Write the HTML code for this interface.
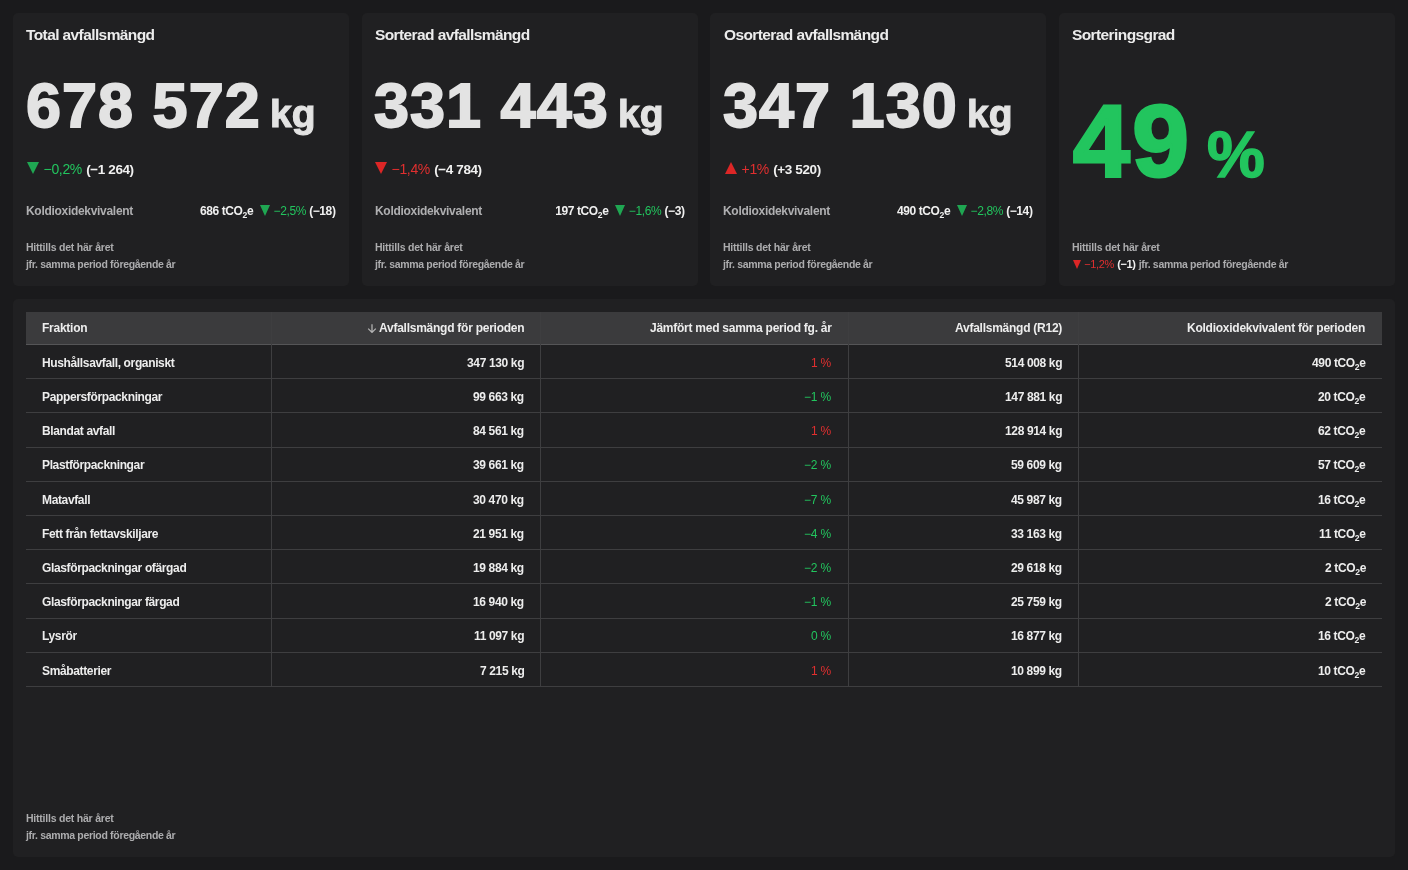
<!DOCTYPE html>
<html lang="sv">
<head>
<meta charset="utf-8">
<title>Avfall</title>
<style>
*{box-sizing:border-box;margin:0;padding:0}
:root{--hy:321.8px;--ry:356.8px;--fy1:813px;--fy2:829.8px}
html,body{width:1408px;height:870px;overflow:hidden;background:#1a1a1c;font-family:"Liberation Sans",sans-serif;color:#ececec}
.card{position:absolute;top:13px;width:336px;height:273px;background:#202022;border-radius:5px}
.abs{position:absolute;white-space:nowrap;line-height:1;will-change:transform}
.title{font-weight:700;font-size:15.5px;letter-spacing:-0.6px;color:#ececec;left:13.4px;top:14.4px}
.c4 .title{left:12.6px}
.big{font-weight:700;font-size:63px;color:#e3e3e3;-webkit-text-stroke:1.8px #e3e3e3;letter-spacing:1px;left:12.7px;top:60.6px}
.kg{font-weight:700;font-size:39px;color:#e3e3e3;-webkit-text-stroke:1.1px #e3e3e3;left:256.7px;top:80.8px}
.delta{left:13.6px;top:149px;font-size:14px;display:flex;align-items:baseline}
.tri{display:inline-block;width:0;height:0;border-left:6.3px solid transparent;border-right:6.3px solid transparent;border-top:12px solid #1fa652}
.tri.red{border-top-color:#dc2626}
.tri.up{border-top:0;border-bottom:12px solid #dc2626;margin-left:1px}
.tri.s{border-left-width:5.2px;border-right-width:5.2px;border-top-width:11px;position:relative;top:0.6px}
.green{color:#22c55e}
.red{color:#e02f2f}
.delta .pct{margin-left:4.6px}
.delta .aw{margin-left:4.3px;font-size:13.5px}
.pct{font-weight:400;letter-spacing:-0.35px}
.aw{font-weight:700;letter-spacing:-0.4px;color:#f0f0f0}
.co2row{left:13px;right:13.5px;top:191.2px;display:flex;justify-content:space-between;align-items:baseline;font-size:12px}
.co2r{display:flex;align-items:baseline}
.co2r .tri{margin-left:5px}
.co2r .pct{margin-left:4px}
.co2r .aw+.tri{margin-left:6.3px}
.co2r .pct+.aw{margin-left:3px}
.lbl{font-weight:700;color:#afafb1;letter-spacing:-0.3px}
.foot{left:13px;font-weight:700;font-size:10.5px;color:#acacae;letter-spacing:-0.22px}
.f1{top:229px}
.f2{top:245.8px}
.f4{display:flex;align-items:baseline}
.f4 .tri{border-left-width:4.6px;border-right-width:4.6px;border-top-width:9px;margin-left:0.6px}
.f4 .pct{margin-left:3.6px;font-size:11px}
.f4 .aw{margin-left:3.2px;font-size:11px}
.f4 .jfr{margin-left:3.3px}
.n49{font-weight:700;font-size:102px;color:#22c55e;-webkit-text-stroke:3px #22c55e;letter-spacing:2.5px;left:13.5px;top:76.5px}
.p49{font-weight:700;font-size:65px;color:#22c55e;-webkit-text-stroke:1.5px #22c55e;left:147.9px;top:108.5px}
sub{font-size:0.72em;vertical-align:-0.3em;line-height:0}
.tcard{position:absolute;left:13px;top:298.67px;width:1382px;height:558.33px;background:#202022;border-radius:5px}
.thead{position:absolute;left:26px;top:312px;width:1356px;height:32px;background:#3b3b3d}
.hline{position:absolute;left:26px;width:1356px;height:1px;background:#3e3e40}
.vline{position:absolute;top:312px;height:374.4px;width:1px;background:#3e3e40}
.th{font-weight:700;font-size:12px;letter-spacing:-0.25px;color:#ededed}
.arrow{position:absolute;left:366.8px;top:324.4px}
.hb{background:#555557}
.td{font-weight:700;font-size:12px;letter-spacing:-0.36px;color:#ededed}
.tp{font-weight:400;font-size:12px;letter-spacing:-0.2px}
.jf{letter-spacing:-0.32px}
</style>
</head>
<body>
<div class="card c1" style="left:13px">
  <div class="abs title">Total avfallsmängd</div>
  <div class="abs big">678 572</div>
  <div class="abs kg">kg</div>
  <div class="abs delta"><span class="tri "></span><span class="pct green">−0,2%</span><span class="aw">(−1 264)</span></div>
  <div class="abs co2row"><span class="lbl">Koldioxidekvivalent</span><span class="co2r"><span class="aw">686 tCO<sub>2</sub>e</span><span class="tri s"></span><span class="pct green">−2,5%</span><span class="aw">(−18)</span></span></div>
  <div class="abs foot f1">Hittills det här året</div>
  <div class="abs foot f2 jf">jfr. samma period föregående år</div>
</div>
<div class="card c2" style="left:361.67px">
  <div class="abs title">Sorterad avfallsmängd</div>
  <div class="abs big">331 443</div>
  <div class="abs kg">kg</div>
  <div class="abs delta"><span class="tri red"></span><span class="pct red">−1,4%</span><span class="aw">(−4 784)</span></div>
  <div class="abs co2row"><span class="lbl">Koldioxidekvivalent</span><span class="co2r"><span class="aw">197 tCO<sub>2</sub>e</span><span class="tri s"></span><span class="pct green">−1,6%</span><span class="aw">(−3)</span></span></div>
  <div class="abs foot f1">Hittills det här året</div>
  <div class="abs foot f2 jf">jfr. samma period föregående år</div>
</div>
<div class="card c3" style="left:710.33px">
  <div class="abs title">Osorterad avfallsmängd</div>
  <div class="abs big">347 130</div>
  <div class="abs kg">kg</div>
  <div class="abs delta"><span class="tri up"></span><span class="pct red">+1%</span><span class="aw">(+3 520)</span></div>
  <div class="abs co2row"><span class="lbl">Koldioxidekvivalent</span><span class="co2r"><span class="aw">490 tCO<sub>2</sub>e</span><span class="tri s"></span><span class="pct green">−2,8%</span><span class="aw">(−14)</span></span></div>
  <div class="abs foot f1">Hittills det här året</div>
  <div class="abs foot f2 jf">jfr. samma period föregående år</div>
</div>
<div class="card c4" style="left:1059px">
  <div class="abs title">Sorteringsgrad</div>
  <div class="abs n49">49</div>
  <div class="abs p49">%</div>
  <div class="abs foot f1">Hittills det här året</div>
  <div class="abs foot f2 f4"><span class="tri s red"></span><span class="pct red">−1,2%</span><span class="aw">(−1)</span><span class="jfr jf">jfr. samma period föregående år</span></div>
</div>
<div class="tcard"></div>
<div class="thead"></div>
<div class="abs th" style="left:42px;top:var(--hy)">Fraktion</div>
<div class="abs th" style="right:884.00px;top:var(--hy)">Avfallsmängd för perioden</div>
<div class="abs th" style="right:576.10px;top:var(--hy)">Jämfört med samma period fg. år</div>
<div class="abs th" style="right:345.90px;top:var(--hy)">Avfallsmängd (R12)</div>
<div class="abs th" style="right:42.50px;top:var(--hy)">Koldioxidekvivalent för perioden</div>
<svg class="arrow" width="10" height="9" viewBox="0 0 10 9"><path d="M5 0.3V8.3M1.2 4.6L5 8.4L8.8 4.6" fill="none" stroke="#b4b4b4" stroke-width="1.25"/></svg>
<div class="hline hb" style="top:344px"></div>
<div class="hline" style="top:378.20px"></div>
<div class="abs td tn" style="left:42px;top:calc(var(--ry) + 0.00px)">Hushållsavfall, organiskt</div>
<div class="abs td" style="right:884.00px;top:calc(var(--ry) + 0.00px)">347 130 kg</div>
<div class="abs tp red" style="right:576.90px;top:calc(var(--ry) + 0.00px)">1 %</div>
<div class="abs td" style="right:345.90px;top:calc(var(--ry) + 0.00px)">514 008 kg</div>
<div class="abs td" style="right:42.50px;top:calc(var(--ry) + 0.00px)">490 tCO<sub>2</sub>e</div>
<div class="hline" style="top:412.40px"></div>
<div class="abs td tn" style="left:42px;top:calc(var(--ry) + 34.20px)">Pappersförpackningar</div>
<div class="abs td" style="right:884.00px;top:calc(var(--ry) + 34.20px)">99 663 kg</div>
<div class="abs tp green" style="right:576.90px;top:calc(var(--ry) + 34.20px)">−1 %</div>
<div class="abs td" style="right:345.90px;top:calc(var(--ry) + 34.20px)">147 881 kg</div>
<div class="abs td" style="right:42.50px;top:calc(var(--ry) + 34.20px)">20 tCO<sub>2</sub>e</div>
<div class="hline" style="top:446.60px"></div>
<div class="abs td tn" style="left:42px;top:calc(var(--ry) + 68.40px)">Blandat avfall</div>
<div class="abs td" style="right:884.00px;top:calc(var(--ry) + 68.40px)">84 561 kg</div>
<div class="abs tp red" style="right:576.90px;top:calc(var(--ry) + 68.40px)">1 %</div>
<div class="abs td" style="right:345.90px;top:calc(var(--ry) + 68.40px)">128 914 kg</div>
<div class="abs td" style="right:42.50px;top:calc(var(--ry) + 68.40px)">62 tCO<sub>2</sub>e</div>
<div class="hline" style="top:480.80px"></div>
<div class="abs td tn" style="left:42px;top:calc(var(--ry) + 102.60px)">Plastförpackningar</div>
<div class="abs td" style="right:884.00px;top:calc(var(--ry) + 102.60px)">39 661 kg</div>
<div class="abs tp green" style="right:576.90px;top:calc(var(--ry) + 102.60px)">−2 %</div>
<div class="abs td" style="right:345.90px;top:calc(var(--ry) + 102.60px)">59 609 kg</div>
<div class="abs td" style="right:42.50px;top:calc(var(--ry) + 102.60px)">57 tCO<sub>2</sub>e</div>
<div class="hline" style="top:515.00px"></div>
<div class="abs td tn" style="left:42px;top:calc(var(--ry) + 136.80px)">Matavfall</div>
<div class="abs td" style="right:884.00px;top:calc(var(--ry) + 136.80px)">30 470 kg</div>
<div class="abs tp green" style="right:576.90px;top:calc(var(--ry) + 136.80px)">−7 %</div>
<div class="abs td" style="right:345.90px;top:calc(var(--ry) + 136.80px)">45 987 kg</div>
<div class="abs td" style="right:42.50px;top:calc(var(--ry) + 136.80px)">16 tCO<sub>2</sub>e</div>
<div class="hline" style="top:549.20px"></div>
<div class="abs td tn" style="left:42px;top:calc(var(--ry) + 171.00px)">Fett från fettavskiljare</div>
<div class="abs td" style="right:884.00px;top:calc(var(--ry) + 171.00px)">21 951 kg</div>
<div class="abs tp green" style="right:576.90px;top:calc(var(--ry) + 171.00px)">−4 %</div>
<div class="abs td" style="right:345.90px;top:calc(var(--ry) + 171.00px)">33 163 kg</div>
<div class="abs td" style="right:42.50px;top:calc(var(--ry) + 171.00px)">11 tCO<sub>2</sub>e</div>
<div class="hline" style="top:583.40px"></div>
<div class="abs td tn" style="left:42px;top:calc(var(--ry) + 205.20px)">Glasförpackningar ofärgad</div>
<div class="abs td" style="right:884.00px;top:calc(var(--ry) + 205.20px)">19 884 kg</div>
<div class="abs tp green" style="right:576.90px;top:calc(var(--ry) + 205.20px)">−2 %</div>
<div class="abs td" style="right:345.90px;top:calc(var(--ry) + 205.20px)">29 618 kg</div>
<div class="abs td" style="right:42.50px;top:calc(var(--ry) + 205.20px)">2 tCO<sub>2</sub>e</div>
<div class="hline" style="top:617.60px"></div>
<div class="abs td tn" style="left:42px;top:calc(var(--ry) + 239.40px)">Glasförpackningar färgad</div>
<div class="abs td" style="right:884.00px;top:calc(var(--ry) + 239.40px)">16 940 kg</div>
<div class="abs tp green" style="right:576.90px;top:calc(var(--ry) + 239.40px)">−1 %</div>
<div class="abs td" style="right:345.90px;top:calc(var(--ry) + 239.40px)">25 759 kg</div>
<div class="abs td" style="right:42.50px;top:calc(var(--ry) + 239.40px)">2 tCO<sub>2</sub>e</div>
<div class="hline" style="top:651.80px"></div>
<div class="abs td tn" style="left:42px;top:calc(var(--ry) + 273.60px)">Lysrör</div>
<div class="abs td" style="right:884.00px;top:calc(var(--ry) + 273.60px)">11 097 kg</div>
<div class="abs tp green" style="right:576.90px;top:calc(var(--ry) + 273.60px)">0 %</div>
<div class="abs td" style="right:345.90px;top:calc(var(--ry) + 273.60px)">16 877 kg</div>
<div class="abs td" style="right:42.50px;top:calc(var(--ry) + 273.60px)">16 tCO<sub>2</sub>e</div>
<div class="hline" style="top:686.00px"></div>
<div class="abs td tn" style="left:42px;top:calc(var(--ry) + 307.80px)">Småbatterier</div>
<div class="abs td" style="right:884.00px;top:calc(var(--ry) + 307.80px)">7 215 kg</div>
<div class="abs tp red" style="right:576.90px;top:calc(var(--ry) + 307.80px)">1 %</div>
<div class="abs td" style="right:345.90px;top:calc(var(--ry) + 307.80px)">10 899 kg</div>
<div class="abs td" style="right:42.50px;top:calc(var(--ry) + 307.80px)">10 tCO<sub>2</sub>e</div>
<div class="vline" style="left:270.70px"></div>
<div class="vline" style="left:540.00px"></div>
<div class="vline" style="left:847.90px"></div>
<div class="vline" style="left:1078.10px"></div>
<div class="abs foot" style="left:26px;top:var(--fy1)">Hittills det här året</div>
<div class="abs foot jf" style="left:26px;top:var(--fy2)">jfr. samma period föregående år</div>
</body>
</html>
